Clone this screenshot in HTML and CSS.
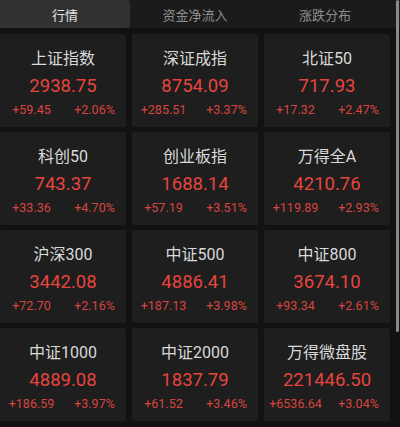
FILE: index.html
```html
<!DOCTYPE html>
<html lang="zh-CN">
<head>
<meta charset="utf-8">
<link rel="stylesheet" href="styles.css">
</head>
<body>
<div class="page">
  <div class="tabs">
    <div class="tab active">行情</div>
    <div class="tab">资金净流入</div>
    <div class="tab">涨跌分布</div>
  </div>
  <div class="grid">
    <div class="card"><div class="name">上证指数</div><div class="value">2938.75</div><div class="chg"><span>+59.45</span><span>+2.06%</span></div></div>
    <div class="card"><div class="name">深证成指</div><div class="value">8754.09</div><div class="chg"><span>+285.51</span><span>+3.37%</span></div></div>
    <div class="card"><div class="name">北证50</div><div class="value">717.93</div><div class="chg"><span>+17.32</span><span>+2.47%</span></div></div>
    <div class="card"><div class="name">科创50</div><div class="value">743.37</div><div class="chg"><span>+33.36</span><span>+4.70%</span></div></div>
    <div class="card"><div class="name">创业板指</div><div class="value">1688.14</div><div class="chg"><span>+57.19</span><span>+3.51%</span></div></div>
    <div class="card"><div class="name">万得全A</div><div class="value">4210.76</div><div class="chg"><span>+119.89</span><span>+2.93%</span></div></div>
    <div class="card"><div class="name">沪深300</div><div class="value">3442.08</div><div class="chg"><span>+72.70</span><span>+2.16%</span></div></div>
    <div class="card"><div class="name">中证500</div><div class="value">4886.41</div><div class="chg"><span>+187.13</span><span>+3.98%</span></div></div>
    <div class="card"><div class="name">中证800</div><div class="value">3674.10</div><div class="chg"><span>+93.34</span><span>+2.61%</span></div></div>
    <div class="card"><div class="name">中证1000</div><div class="value">4889.08</div><div class="chg"><span>+186.59</span><span>+3.97%</span></div></div>
    <div class="card"><div class="name">中证2000</div><div class="value">1837.79</div><div class="chg"><span>+61.52</span><span>+3.46%</span></div></div>
    <div class="card"><div class="name">万得微盘股</div><div class="value">221446.50</div><div class="chg"><span>+6536.64</span><span>+3.04%</span></div></div>
  </div>
  <div class="scrollbar"></div>
</div>
</body>
</html>
```
FILE: styles.css
```css
html, body {
  margin: 0;
  padding: 0;
  background: #121212;
}
body {
  width: 400px;
  height: 427px;
  overflow: hidden;
  font-family: Roboto, "Noto Sans CJK SC", sans-serif;
}
.page {
  position: relative;
  width: 400px;
  height: 427px;
  padding-right: 10px;
  box-sizing: border-box;
}
.tabs {
  display: grid;
  grid-template-columns: repeat(3, 1fr);
  height: 28px;
  background: #1b1b1b;
  margin-right: -10px;
  padding-right: 10px;
}
.tab {
  display: flex;
  align-items: center;
  justify-content: center;
  font-size: 13px;
  color: #8e8e8e;
  font-family: "Noto Sans CJK SC", sans-serif;
}
.tab.active {
  background: #313131;
  color: #e4e4e4;
  border-radius: 0 3px 3px 0;
}
.grid {
  display: grid;
  grid-template-columns: repeat(3, 1fr);
  column-gap: 6px;
  row-gap: 5px;
  margin-top: 6px;
}
.card {
  height: 93px;
  background: #1e1e1e;
  border-radius: 2px;
  box-sizing: border-box;
  padding-top: 15px;
  display: flex;
  flex-direction: column;
  align-items: stretch;
}
.name {
  text-align: center;
  font-size: 16px;
  line-height: 20px;
  color: #d9d9d9;
}
.value {
  text-align: center;
  font-size: 18.5px;
  line-height: 24px;
  margin-top: 5px;
  color: #e6453d;
}
.chg {
  display: grid;
  grid-template-columns: 1fr 1fr;
  margin-top: 4px;
  font-size: 12.5px;
  line-height: 16px;
  color: #d8453e;
}
.chg span {
  text-align: center;
}
.scrollbar {
  position: absolute;
  top: 0;
  right: 1px;
  width: 3px;
  height: 332px;
  background: #8a8a8a;
  border-radius: 2px;
}
```
